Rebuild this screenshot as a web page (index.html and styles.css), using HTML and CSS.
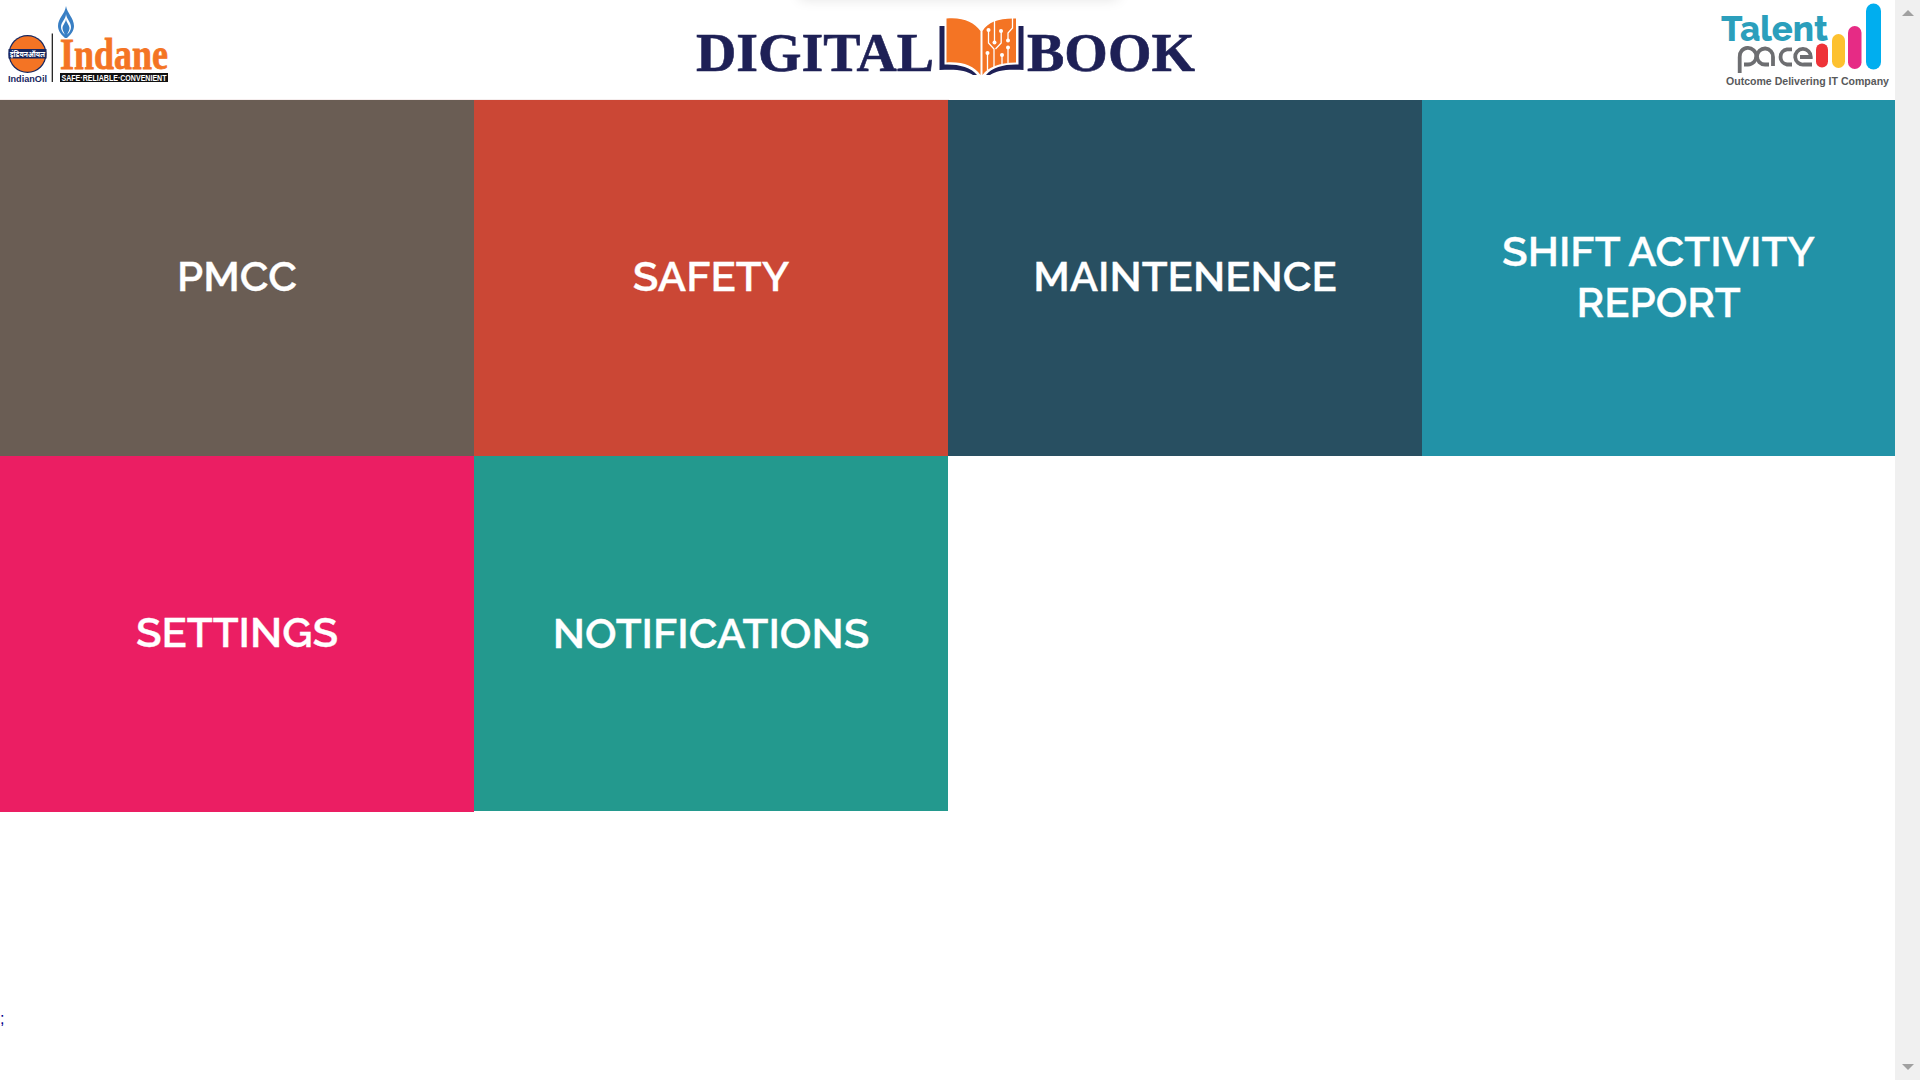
FILE: index.html
```html
<!DOCTYPE html>
<html lang="en">
<head>
<meta charset="utf-8">
<title>Digital Book</title>
<link rel="stylesheet" href="styles.css">
</head>
<body>
<div class="app">
  <main class="page">
    <header class="header">
      <svg class="logo-indane" viewBox="0 0 190 99" role="img" aria-label="Indane">
        <circle cx="27.5" cy="54" r="19" fill="#17265f"/>
        <circle cx="27.5" cy="54" r="17.8" fill="#f47424"/>
        <rect x="8.5" y="49" width="38" height="9.5" fill="#17265f"/>
        <text x="10" y="57" class="hindi" textLength="35" lengthAdjust="spacingAndGlyphs">इंडियनऑयल</text>
        <text x="8" y="81.5" class="indianoil" textLength="39" lengthAdjust="spacingAndGlyphs">IndianOil</text>
        <path d="M52.3 33.500V82" stroke="#111" stroke-width="1.2"/>
        <path d="M66 6C67 13 74 18 74 26C74 31 70.500 35 67 38H65C61.500 35 58 31 58 26C58 18 65 14 66 6Z" fill="#397fc4"/>
        <path d="M66 14C66.500 19 71 22 71 27C71 31 68 34 66 35.500C64 34 61 31 61 27C61 22 66 19 66 14Z" fill="#fff"/>
        <path d="M66 19C66.500 23 69.500 25 69.500 28C69.500 31 67 33 66.500 38H65.500C65 33 62.500 31 62.500 28C62.500 25 65.500 23 66 19Z" fill="#397fc4"/>
        <text x="60" y="69" class="indane" textLength="108" lengthAdjust="spacingAndGlyphs">Indane</text>
        <rect x="60" y="73" width="108" height="9" fill="#111"/>
        <text x="61.500" y="80.500" class="motto" textLength="105" lengthAdjust="spacingAndGlyphs">SAFE·RELIABLE·CONVENIENT</text>
      </svg>
      <svg class="logo-book" viewBox="0 0 520 99" role="img" aria-label="Digital Book">
        <text x="6" y="71.300" class="wordmark" textLength="238" lengthAdjust="spacingAndGlyphs">DIGITAL</text>
        <text x="337" y="71.300" class="wordmark" textLength="168" lengthAdjust="spacingAndGlyphs">BOOK</text>
        <g fill="#1e2056">
          <path d="M249.500 26H254.500V64.500C268 64 281 67 287 75H283C276 70 266 69 249.500 70Z"/>
          <path d="M333.500 26H328.500V64.500C315 64 302 67 296 75H300C307 70 317 69 333.500 70Z"/>
        </g>
        <path d="M256.500 18.500C273 17 284 22 290.500 31V75C284 66 273 61.500 256.500 62.500Z" fill="#f47424"/>
        <path d="M326 18.500C309 18 298 22 292.500 31V75C298 67 309 63 326 62.500Z" fill="#f47424"/>
        <g stroke="#fff" stroke-width="1.300" fill="none">
          <path d="M304.500 21V42M298.500 30V43L304 49V67M311.200 31V43L305.500 49M297.500 53V70M312 55V64M318 48V63M318 40V33L322.500 28V18"/>
        </g>
        <g fill="#fff">
          <circle cx="298.500" cy="30" r="2"/><circle cx="311" cy="31" r="2"/><circle cx="304.500" cy="42.500" r="2"/><circle cx="318" cy="40.500" r="2"/><circle cx="318" cy="47.500" r="2"/><circle cx="297.500" cy="53" r="2"/><circle cx="312" cy="55" r="2"/>
        </g>
      </svg>
      <svg class="logo-talent" viewBox="0 0 195 99" role="img" aria-label="Talent Pace">
        <text x="21" y="41" class="talent" textLength="107" lengthAdjust="spacingAndGlyphs">Talent</text>
        <g fill="none" stroke="#6d6e71" stroke-width="3.800">
          <path d="M39.700 73V57A8.300 8.300 0 1 1 48 64.500H44"/>
          <path d="M73 66V57A8 8 0 1 0 65 64.500H69"/>
          <path d="M92 64.500H87A7.700 7.700 0 0 1 87 49.300H92"/>
          <path d="M112 64.500H104A7.800 7.800 0 1 1 110.800 57H100"/>
        </g>
        <rect x="116" y="43.500" width="12" height="24" rx="6" fill="#ee3338"/>
        <rect x="132" y="34" width="13" height="34" rx="6.500" fill="#fdc12f"/>
        <rect x="148" y="26" width="13.500" height="43" rx="6.750" fill="#e62b85"/>
        <rect x="166" y="3.500" width="15" height="66" rx="7.500" fill="#00aeef"/>
        <text x="26" y="84.500" class="tagline" textLength="163" lengthAdjust="spacingAndGlyphs">Outcome Delivering IT Company</text>
      </svg>
      <span class="top-shade"></span>
    </header>
    <nav class="tiles">
      <a class="tile pmcc"><span>PMCC</span></a>
      <a class="tile safety"><span>SAFETY</span></a>
      <a class="tile maintenance"><span>MAINTENENCE</span></a>
      <a class="tile shift"><span>SHIFT ACTIVITY</span><span>REPORT</span></a>
      <a class="tile settings"><span>SETTINGS</span></a>
      <a class="tile notifications"><span>NOTIFICATIONS</span></a>
    </nav>
    <p class="stray">;</p>
  </main>
  <aside class="scrollbar"><i class="up"></i><i class="down"></i></aside>
</div>
</body>
</html>
```
FILE: styles.css
```css
* { box-sizing: border-box; }
body { margin: 0; background: #fff; font-family: Raleway, Lato, sans-serif; overflow: hidden; }
.app { display: flex; height: 1080px; }
.page { flex: 1; display: flex; flex-direction: column; }
.header { position: relative; flex: none; height: 100px; display: flex; justify-content: space-between; }
.header::after { content: ""; position: absolute; left: 0; bottom: 0; width: 949px; height: 1px; background: #f5eded; }
.header svg { flex: none; height: 99px; display: block; }
.logo-indane { width: 190px; }
.logo-book { width: 520px; margin-left: 10px; }
.logo-talent { width: 195px; }
.top-shade { position: absolute; left: 800px; top: -12px; width: 318px; height: 10px; box-shadow: 0 0 14px rgba(0,0,0,.15); }
.hindi { font: bold 8px "Noto Sans", sans-serif; fill: #fff; }
.indianoil { font: bold 8.5px "Liberation Sans", sans-serif; fill: #17265f; }
.indane { font: bold 44px "Liberation Serif", serif; fill: #f47424; stroke: #f47424; stroke-width: .8; }
.motto { font: bold 8.5px "Liberation Sans", sans-serif; fill: #fff; }
.wordmark { font: bold 55px "Liberation Serif", serif; fill: #1e2056; stroke: #1e2056; stroke-width: .6; }
.talent { font: 800 35px Raleway, Lato, sans-serif; fill: #2b9fbc; }
.tagline { font: bold 10.5px "Liberation Sans", sans-serif; fill: #58595b; }
.tiles { display: grid; flex: none; grid-template-columns: repeat(3, 474px) 1fr; grid-auto-rows: 356px; }
.tile { display: flex; flex-direction: column; align-items: center; justify-content: center; padding-bottom: 3px; color: #fff; font: 600 42px/51px Raleway, Lato, sans-serif; -webkit-text-stroke: .3px #fff; }
.pmcc { background: #6a5d54; }
.safety { background: #cb4735; }
.maintenance { background: #284f61; }
.shift { background: #2292a7; }
.settings { background: #eb1e63; }
.notifications { background: #23998e; height: 355px; padding-bottom: 1px; }
.stray { margin: 195px 0 0; font: 16px/24px "Liberation Sans", sans-serif; color: #00008b; }
.scrollbar { width: 25px; background: #f0f0f0; display: flex; flex-direction: column; justify-content: space-between; align-items: center; padding: 10px 0; }
.up, .down { border: 6px solid transparent; width: 0; height: 0; }
.up { border-top: 0; border-bottom-color: #a0a0a0; }
.down { border-bottom: 0; border-top-color: #a0a0a0; }
```
